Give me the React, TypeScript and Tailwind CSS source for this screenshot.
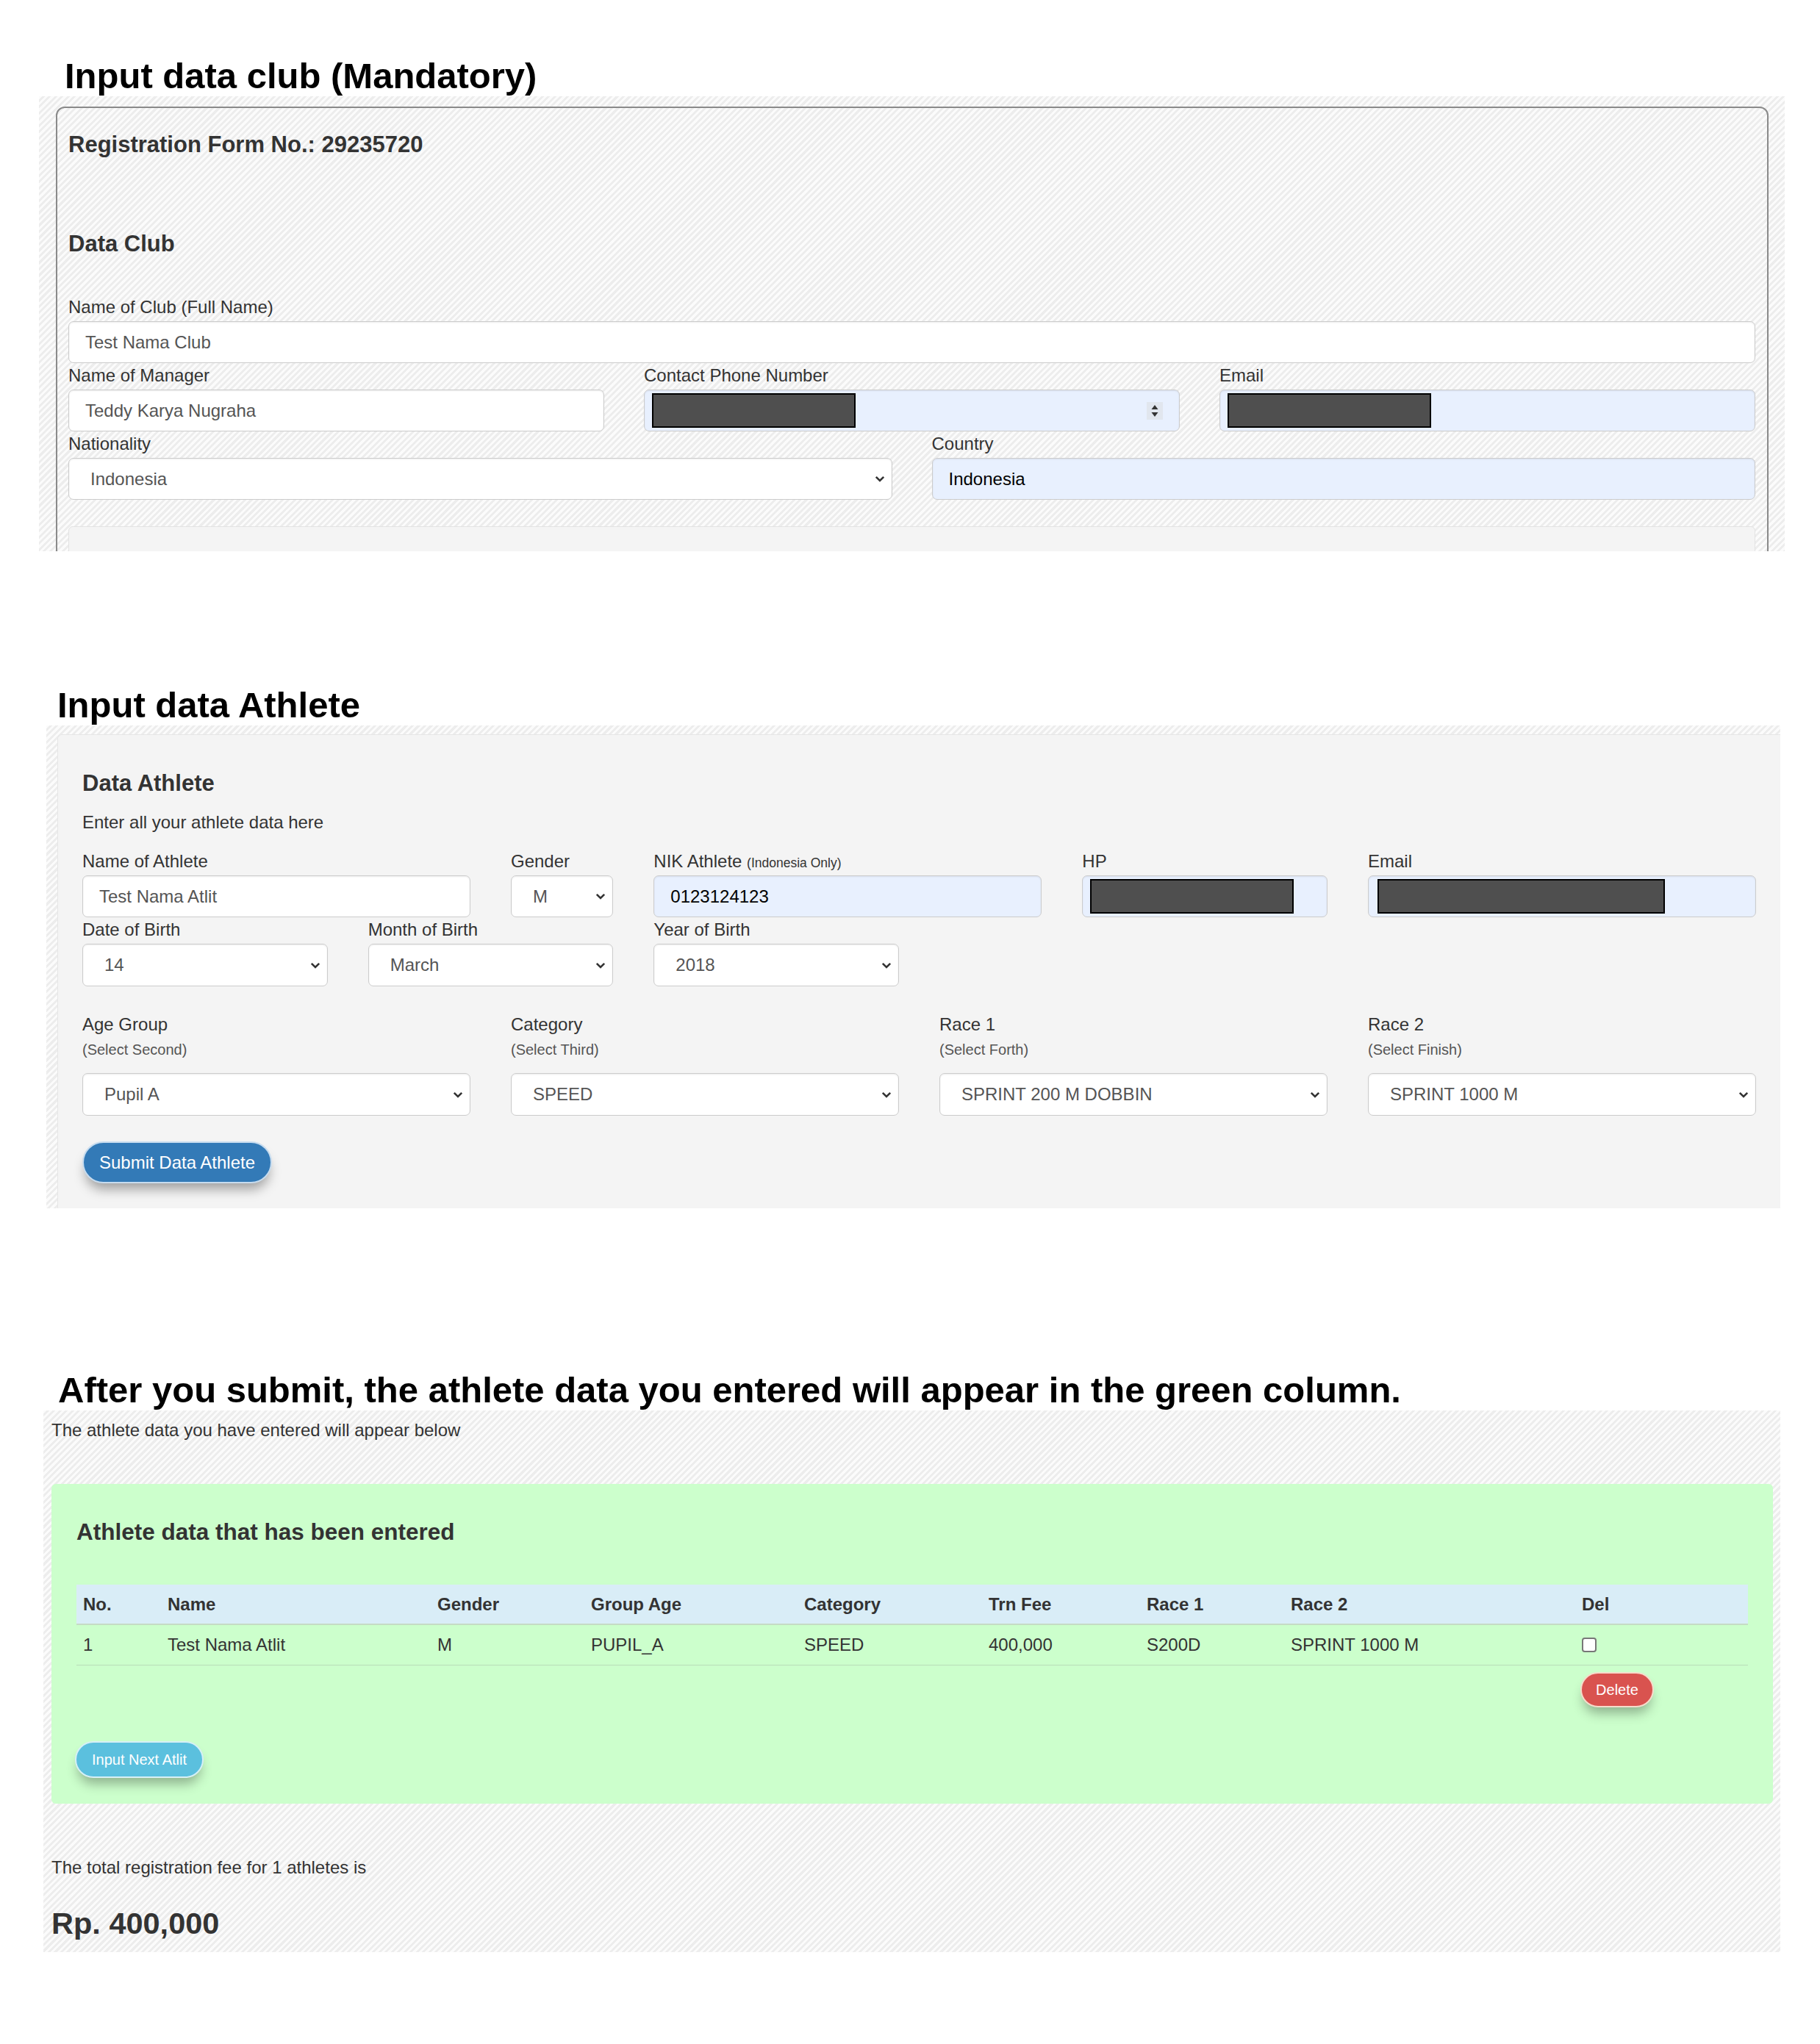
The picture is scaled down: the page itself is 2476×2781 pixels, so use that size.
import React from "react";

const hatch =
  "bg-[image:repeating-linear-gradient(135deg,#fbfbfb_0px,#fbfbfb_3px,#ededed_3px,#ededed_6px)]";

function Chevron() {
  return (
    <svg width="14" height="9" viewBox="0 0 14 9" className="shrink-0">
      <path d="M1.8 1.8 7 7l5.2-5.2" fill="none" stroke="#333" strokeWidth="2.6" />
    </svg>
  );
}

function Spinner() {
  return (
    <svg width="12" height="18" viewBox="0 0 12 18" className="shrink-0">
      <path d="M6 1 10.5 7h-9z" fill="#333" />
      <path d="M6 17 10.5 11h-9z" fill="#333" />
    </svg>
  );
}

function Redacted({ w }: { w: string }) {
  return <div className={`h-[47px] bg-[#4f4f4f] border-2 border-black ${w}`} />;
}

function Label({ children }: { children: React.ReactNode }) {
  return <div className="h-[34px] leading-[34px] mb-[2px] text-[#333] whitespace-nowrap">{children}</div>;
}

function Box({
  children,
  fill = false,
  className = "",
}: {
  children?: React.ReactNode;
  fill?: boolean;
  className?: string;
}) {
  return (
    <div
      className={`h-[57px] rounded-[7px] border border-[#cccccc] shadow-[inset_0_1px_2px_rgba(0,0,0,0.08)] flex items-center ${
        fill ? "bg-[#e8f0fe] text-black" : "bg-white text-[#555]"
      } ${className}`}
    >
      {children}
    </div>
  );
}

function Input({ label, value, fill }: { label: React.ReactNode; value: string; fill?: boolean }) {
  return (
    <div>
      <Label>{label}</Label>
      <Box fill={fill} className="pl-[22px]">
        {value}
      </Box>
    </div>
  );
}

function Select({ label, value, tall }: { label: React.ReactNode; value: string; tall?: boolean }) {
  return (
    <div>
      {label}
      <Box className={`pl-[29px] pr-[9px] justify-between ${tall ? "h-[58px]" : ""}`}>
        <span>{value}</span>
        <Chevron />
      </Box>
    </div>
  );
}

function StackLabel({ title, hint }: { title: string; hint: string }) {
  return (
    <div className="mb-[15px] text-[#333]">
      <div className="h-[34px] leading-[34px]">{title}</div>
      <div className="h-[34px] leading-[34px] text-[20px] text-[#555]">{hint}</div>
    </div>
  );
}

function Heading({ children, className = "" }: { children: React.ReactNode; className?: string }) {
  return <h2 className={`text-[49px] leading-[56px] font-bold text-black whitespace-nowrap ${className}`}>{children}</h2>;
}

function ClubSection() {
  return (
    <section>
      <Heading className="ml-[88px]">Input data club (Mandatory)</Heading>
      <div className={`ml-[53px] w-[2375px] h-[619px] overflow-hidden pt-[14px] pl-[23px] pr-[22px] ${hatch}`}>
        <div className="h-[700px] border-2 border-[#8a8a8a] rounded-[12px] pt-[33px] pl-[15px] pr-[16px]">
          <h4 className="text-[31px] leading-[33px] font-bold text-[#333]">Registration Form No.: 29235720</h4>
          <h4 className="mt-[102px] text-[31px] leading-[33px] font-bold text-[#333]">Data Club</h4>
          <div className="mt-[53px] grid grid-cols-12 gap-x-[54px]">
            <div className="col-span-12">
              <Input label="Name of Club (Full Name)" value="Test Nama Club" />
            </div>
            <div className="col-span-4">
              <Input label="Name of Manager" value="Teddy Karya Nugraha" />
            </div>
            <div className="col-span-4">
              <Label>Contact Phone Number</Label>
              <Box fill className="pl-[10px] pr-[22px] justify-between">
                <Redacted w="w-[277px]" />
                <div className="h-[24px] w-[22px] bg-[#e1e6ee] flex items-center justify-center">
                  <Spinner />
                </div>
              </Box>
            </div>
            <div className="col-span-4">
              <Label>Email</Label>
              <Box fill className="pl-[10px]">
                <Redacted w="w-[277px]" />
              </Box>
            </div>
            <div className="col-span-6">
              <Select label={<Label>Nationality</Label>} value="Indonesia" />
            </div>
            <div className="col-span-6">
              <Input label="Country" value="Indonesia" fill />
            </div>
          </div>
          <div className="mt-[36px] h-[100px] rounded-[6px] border border-[#e3e3e3] bg-[#f4f4f4]" />
        </div>
      </div>
    </section>
  );
}

function AthleteSection() {
  return (
    <section className="mt-[181px]">
      <Heading className="ml-[78px]">Input data Athlete</Heading>
      <div className={`ml-[63px] w-[2359px] h-[657px] overflow-hidden pt-[12px] pl-[15px] ${hatch}`}>
        <div className="h-[700px] bg-[#f4f4f4] border-t border-l border-[#e6e6e6] rounded-tl-[6px] pt-[49px] pl-[33px] pr-[33px]">
          <h4 className="text-[31px] leading-[33px] font-bold text-[#333]">Data Athlete</h4>
          <p className="mt-[20px] h-[34px] leading-[34px] text-[#333]">Enter all your athlete data here</p>
          <div className="mt-[19px] grid grid-cols-12 gap-x-[55px]">
            <div className="col-span-3">
              <Input label="Name of Athlete" value="Test Nama Atlit" />
            </div>
            <div className="col-span-1">
              <Select label={<Label>Gender</Label>} value="M" />
            </div>
            <div className="col-span-3">
              <Input
                label={
                  <>
                    NIK Athlete <span className="text-[17.5px]">(Indonesia Only)</span>
                  </>
                }
                value="0123124123"
                fill
              />
            </div>
            <div className="col-span-2">
              <Label>HP</Label>
              <Box fill className="pl-[10px]">
                <Redacted w="w-[277px]" />
              </Box>
            </div>
            <div className="col-span-3">
              <Label>Email</Label>
              <Box fill className="pl-[12px]">
                <Redacted w="w-[391px]" />
              </Box>
            </div>
            <div className="col-span-2">
              <Select label={<Label>Date of Birth</Label>} value="14" tall />
            </div>
            <div className="col-span-2">
              <Select label={<Label>Month of Birth</Label>} value="March" tall />
            </div>
            <div className="col-span-2">
              <Select label={<Label>Year of Birth</Label>} value="2018" tall />
            </div>
            <div className="col-span-6" />
          </div>
          <div className="mt-[35px] grid grid-cols-4 gap-x-[55px]">
            <Select label={<StackLabel title="Age Group" hint="(Select Second)" />} value="Pupil A" tall />
            <Select label={<StackLabel title="Category" hint="(Select Third)" />} value="SPEED" tall />
            <Select label={<StackLabel title="Race 1" hint="(Select Forth)" />} value="SPRINT 200 M DOBBIN" tall />
            <Select label={<StackLabel title="Race 2" hint="(Select Finish)" />} value="SPRINT 1000 M" tall />
          </div>
          <button className="mt-[35px] h-[57px] w-[258px] rounded-full bg-[#337ab7] border-2 border-[#c7dcef] text-white shadow-[0_12px_16px_-4px_rgba(0,0,0,0.35)]">
            Submit Data Athlete
          </button>
        </div>
      </div>
    </section>
  );
}

const cols = ["w-[115px]", "w-[367px]", "w-[209px]", "w-[290px]", "w-[251px]", "w-[215px]", "w-[196px]", "w-[396px]", "w-[235px]"];
const head = ["No.", "Name", "Gender", "Group Age", "Category", "Trn Fee", "Race 1", "Race 2", "Del"];
const row = ["1", "Test Nama Atlit", "M", "PUPIL_A", "SPEED", "400,000", "S200D", "SPRINT 1000 M"];

function ResultSection() {
  return (
    <section className="mt-[219px]">
      <Heading className="ml-[79px]">After you submit, the athlete data you entered will appear in the green column.</Heading>
      <div className={`ml-[59px] w-[2363px] h-[737px] overflow-hidden pt-[10px] pl-[11px] pr-[10px] ${hatch}`}>
        <p className="h-[34px] leading-[34px] text-[#333]">The athlete data you have entered will appear below</p>
        <div className="mt-[56px] bg-[#ccffcc] rounded-[6px] pt-[49px] pb-[35px] px-[34px]">
          <h4 className="text-[31.5px] leading-[33px] font-bold text-[#333]">Athlete data that has been entered</h4>
          <table className="mt-[55px] w-[2274px] table-fixed border-collapse text-[#333]">
            <colgroup>
              {cols.map((c, i) => (
                <col key={i} className={c} />
              ))}
            </colgroup>
            <thead>
              <tr className="h-[54px] bg-[#d9edf7] border-b-2 border-[#c5dcc5]">
                {head.map((h) => (
                  <th key={h} className="pl-[9px] text-left font-bold">
                    {h}
                  </th>
                ))}
              </tr>
            </thead>
            <tbody>
              <tr className="h-[55px] border-b border-[#b9dcb9]">
                {row.map((c, i) => (
                  <td key={i} className="pl-[9px]">
                    {c}
                  </td>
                ))}
                <td className="pl-[9px]">
                  <div className="w-[20px] h-[20px] rounded-[4px] border-2 border-[#777] bg-white" />
                </td>
              </tr>
              <tr>
                <td colSpan={8} />
                <td className="pl-[7px] pt-[9px]">
                  <button className="h-[48px] w-[100px] rounded-full bg-[#d9534f] border-2 border-[#f6dccb] text-white text-[20px] shadow-[0_12px_16px_-4px_rgba(0,0,0,0.3)]">
                    Delete
                  </button>
                </td>
              </tr>
            </tbody>
          </table>
          <button className="mt-[46px] -ml-[2px] h-[50px] w-[175px] rounded-full bg-[#5bc0de] border-2 border-[#d6f0f6] text-white text-[20px] shadow-[0_12px_16px_-4px_rgba(0,0,0,0.3)]">
            Input Next Atlit
          </button>
        </div>
        <p className="mt-[70px] h-[34px] leading-[34px] text-[#333]">The total registration fee for 1 athletes is</p>
        <h3 className="mt-[37px] text-[41.5px] leading-[44px] font-bold text-[#333]">Rp. 400,000</h3>
      </div>
    </section>
  );
}

export default function App() {
  return (
    <div className="w-[2476px] h-[2781px] bg-white pt-[75px] font-['Liberation_Sans',Arial,sans-serif] text-[24px]">
      <ClubSection />
      <AthleteSection />
      <ResultSection />
    </div>
  );
}
